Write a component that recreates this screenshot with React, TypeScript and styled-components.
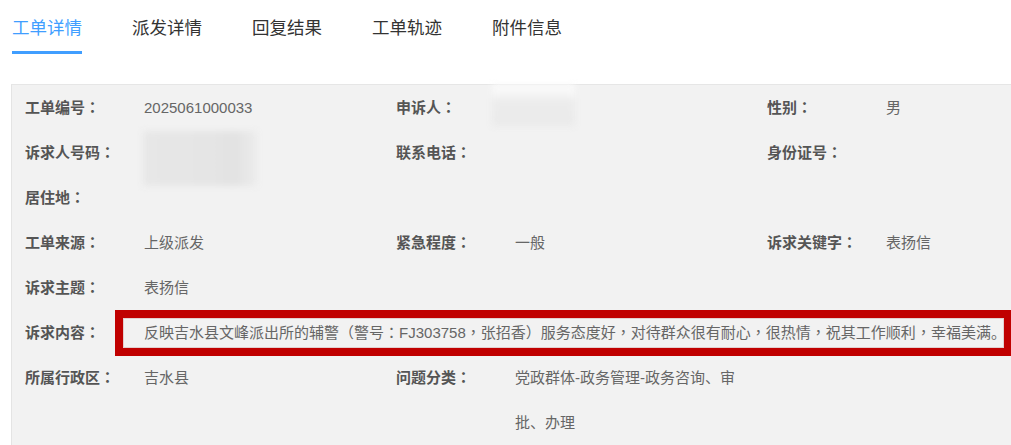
import React, { FC } from 'react'
import styled, { createGlobalStyle } from 'styled-components'

const GlobalStyle = createGlobalStyle`
    html, body {
        margin: 0;
        padding: 0;
        background: #fff;
        overflow: hidden;
        font-family: "Liberation Sans", "Noto Sans CJK SC", sans-serif;
    }
`

const Page = styled.div`
    width: 1011px;
`

const TabBar = styled.div`
    display: flex;
    gap: 50px;
    padding-left: 12px;
`

const Tab = styled.div<{ $active?: boolean }>`
    font-size: 17.5px;
    line-height: 21px;
    padding: 18px 0 12px;
    color: ${p => (p.$active ? '#409eff' : '#333')};
    border-bottom: 3px solid ${p => (p.$active ? '#409eff' : 'transparent')};
    cursor: pointer;
`

const Panel = styled.div`
    margin: 30px 0 0 11px;
    background: #f2f2f2;
    border-top: 1px solid #e6e6e6;
    border-left: 1px solid #e4e4e4;
    padding-left: 13px;
    padding-bottom: 20px;
`

const Row = styled.div`
    display: flex;
    height: auto;
    min-height: 45px;
`

const Field = styled.div<{ $wide?: boolean }>`
    display: flex;
    width: ${p => (p.$wide ? 'auto' : '371px')};
    flex: ${p => (p.$wide ? '1' : 'none')};
`

const Label = styled.div`
    width: 119px;
    flex: none;
    font-size: 15px;
    font-weight: bold;
    line-height: 45px;
    color: #555;
`

const Value = styled.div<{ $wide?: boolean }>`
    position: relative;
    flex: 1;
    font-size: 15px;
    line-height: 45px;
    color: #666;
    padding-right: ${p => (p.$wide ? '0' : '27px')};
`

// the red annotation frame drawn over the complaint text
const Marked = styled(Value)`
    &::after {
        content: '';
        position: absolute;
        top: 0;
        bottom: -1px;
        left: -29px;
        right: -1px;
        border: 8px solid #c00000;
        box-shadow: inset 0 0 0 1px #e2cfcf;
        pointer-events: none;
    }
`

// centred full-width colon / comma, as the original font draws them
const Punct = styled.span`
    font-family: "Noto Sans CJK TC", sans-serif;
    line-height: 1;
`

const Redacted = styled.span<{ $top: number; $left: number; $w: number; $h: number; $bg: string }>`
    position: absolute;
    top: ${p => p.$top}px;
    left: ${p => p.$left}px;
    width: ${p => p.$w}px;
    height: ${p => p.$h}px;
    background: ${p => p.$bg};
    filter: blur(3px);
`

const fmt = (text: string) =>
    text.split(/([：，])/).map((part, i) => (i % 2 ? <Punct key={i}>{part}</Punct> : part))

const tabs = ['工单详情', '派发详情', '回复结果', '工单轨迹', '附件信息']

type Item = { label: string; value?: React.ReactNode }

const InfoRow: FC<{ items: Item[] }> = ({ items }) => (
    <Row>
        {items.map((it, i) => (
            <Field key={i}>
                <Label>{fmt(it.label)}</Label>
                <Value>{it.value}</Value>
            </Field>
        ))}
    </Row>
)

const App: FC = () => {
    return (
        <Page>
            <GlobalStyle />
            <TabBar>
                {tabs.map((t, i) => (
                    <Tab key={t} $active={i === 0}>{t}</Tab>
                ))}
            </TabBar>
            <Panel>
                <InfoRow
                    items={[
                        { label: '工单编号：', value: '2025061000033' },
                        {
                            label: '申诉人：',
                            value: (
                                <Redacted
                                    $top={-1}
                                    $left={-23}
                                    $w={83}
                                    $h={42}
                                    $bg="linear-gradient(180deg, #fbfbfb 0%, #f6f6f6 25%, #ececec 40%, #eaeaea 100%)"
                                />
                            ),
                        },
                        { label: '性别：', value: '男' },
                    ]}
                />
                <InfoRow
                    items={[
                        {
                            label: '诉求人号码：',
                            value: (
                                <Redacted
                                    $top={1}
                                    $left={-1}
                                    $w={114}
                                    $h={55}
                                    $bg="linear-gradient(90deg, #e7e7e7 0%, #e5e5e5 60%, #e2e2e2 80%, #ececec 100%)"
                                />
                            ),
                        },
                        { label: '联系电话：' },
                        { label: '身份证号：' },
                    ]}
                />
                <InfoRow items={[{ label: '居住地：' }]} />
                <InfoRow
                    items={[
                        { label: '工单来源：', value: '上级派发' },
                        { label: '紧急程度：', value: '一般' },
                        { label: '诉求关键字：', value: '表扬信' },
                    ]}
                />
                <InfoRow items={[{ label: '诉求主题：', value: '表扬信' }]} />
                <Row>
                    <Field $wide>
                        <Label>{fmt('诉求内容：')}</Label>
                        <Marked $wide>
                            {fmt('反映吉水县文峰派出所的辅警（警号：FJ303758，张招香）服务态度好，对待群众很有耐心，很热情，祝其工作顺利，幸福美满。')}
                        </Marked>
                    </Field>
                </Row>
                <InfoRow
                    items={[
                        { label: '所属行政区：', value: '吉水县' },
                        { label: '问题分类：', value: '党政群体-政务管理-政务咨询、审批、办理' },
                    ]}
                />
            </Panel>
        </Page>
    )
}

export default App
